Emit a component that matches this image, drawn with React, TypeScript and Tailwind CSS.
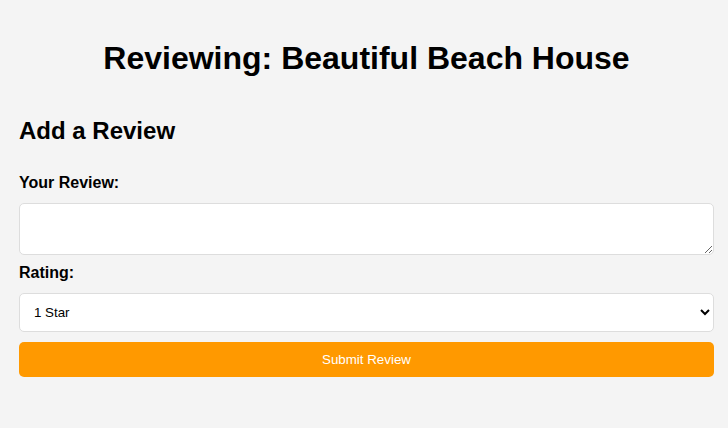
export default function App() {
  return (
    <div className="min-h-[428px] bg-[#f4f4f4] font-['Liberation_Sans',Arial,sans-serif] text-black">
      <div className="ml-[19px] w-[695px] pt-[40px]">
        <h1 className="text-center text-[32px] font-bold leading-[37px]">
          Reviewing: Beautiful Beach House
        </h1>
        <form className="mt-[40px] flex flex-col" onSubmit={(e) => e.preventDefault()}>
          <h2 className="text-[24px] font-bold leading-[28px]">Add a Review</h2>
          <label htmlFor="review" className="mt-[29px] text-[16px] font-bold leading-[18px]">
            Your Review:
          </label>
          <textarea
            id="review"
            className="mt-[11px] h-[52px] w-full rounded-[5px] border border-[#dddddd] bg-white p-[10px] text-[13.333px]"
          />
          <label htmlFor="rating" className="mt-[9px] text-[16px] font-bold leading-[18px]">
            Rating:
          </label>
          <select
            id="rating"
            className="mt-[11px] h-[39px] w-full rounded-[5px] border border-[#dddddd] bg-white px-[10px] text-[13.333px]"
            defaultValue="1"
          >
            <option value="1">1 Star</option>
            <option value="2">2 Stars</option>
            <option value="3">3 Stars</option>
            <option value="4">4 Stars</option>
            <option value="5">5 Stars</option>
          </select>
          <button
            type="submit"
            className="mt-[10px] h-[35px] w-full rounded-[5px] bg-[#ff9900] text-[13.333px] text-white"
          >
            Submit Review
          </button>
        </form>
      </div>
    </div>
  );
}
